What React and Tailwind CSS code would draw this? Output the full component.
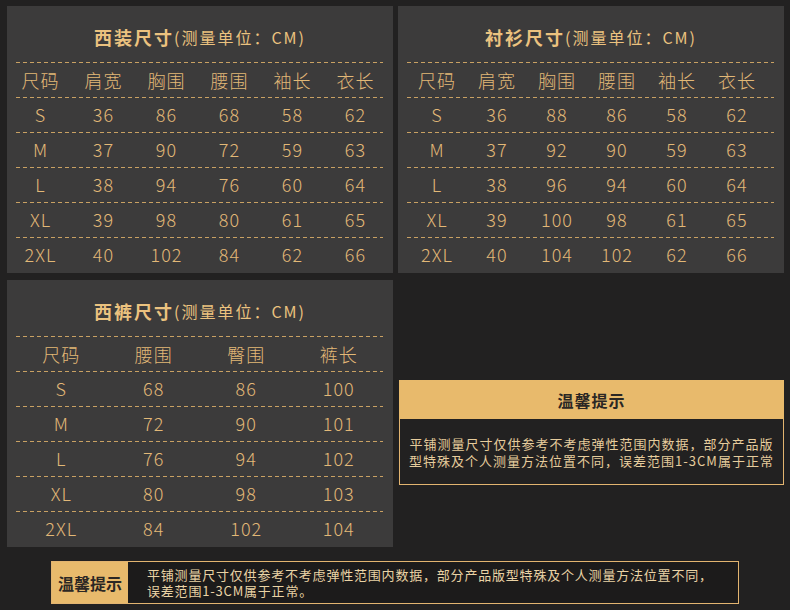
import React from 'react';

const suit = {
  title: '西装尺寸',
  head: ['尺码', '肩宽', '胸围', '腰围', '袖长', '衣长'],
  rows: [
    ['S', '36', '86', '68', '58', '62'],
    ['M', '37', '90', '72', '59', '63'],
    ['L', '38', '94', '76', '60', '64'],
    ['XL', '39', '98', '80', '61', '65'],
    ['2XL', '40', '102', '84', '62', '66'],
  ],
  grid: 'grid grid-cols-[repeat(6,63px)] pl-[2px]',
};

const shirt = {
  title: '衬衫尺寸',
  head: ['尺码', '肩宽', '胸围', '腰围', '袖长', '衣长'],
  rows: [
    ['S', '36', '88', '86', '58', '62'],
    ['M', '37', '92', '90', '59', '63'],
    ['L', '38', '96', '94', '60', '64'],
    ['XL', '39', '100', '98', '61', '65'],
    ['2XL', '40', '104', '102', '62', '66'],
  ],
  grid: 'grid grid-cols-[repeat(6,60px)] pl-[9px]',
};

const pants = {
  title: '西裤尺寸',
  head: ['尺码', '腰围', '臀围', '裤长'],
  rows: [
    ['S', '68', '86', '100'],
    ['M', '72', '90', '101'],
    ['L', '76', '94', '102'],
    ['XL', '80', '98', '103'],
    ['2XL', '84', '102', '104'],
  ],
  grid: 'grid grid-cols-[repeat(4,92.5px)] pl-[8px]',
};

const Dash = () => (
  <div className="ml-[9px] mr-[10px] h-px bg-[repeating-linear-gradient(90deg,#c9a163_0_4px,transparent_4px_7px)]" />
);

function Row({ cells, grid, head }) {
  return (
    <div className={`${grid} h-[34px] items-center ${head ? '' : 'pb-[3px]'}`}>
      {cells.map((c, i) => (
        <span key={i} className="text-center text-[18px] font-light leading-none tracking-[1px] text-[#e2b877]">
          {c}
        </span>
      ))}
    </div>
  );
}

function SizePanel({ data }) {
  return (
    <div className="h-[267px] bg-[#3c3b3b]">
      <div className="flex h-[56px] items-center justify-center pt-[6px] text-[#ebc27f]">
        <span className="text-[18px] font-bold tracking-[2px]">{data.title}</span>
        <span className="text-[16px] tracking-[2px]">(测量单位：CM)</span>
      </div>
      <Dash />
      <Row cells={data.head} grid={data.grid} head />
      {data.rows.map((r, i) => (
        <div key={i}>
          <Dash />
          <Row cells={r} grid={data.grid} />
        </div>
      ))}
    </div>
  );
}

export default function App() {
  return (
    <div className="h-[610px] w-[790px] overflow-hidden bg-[#222121] pl-[7px] pt-[6px] font-['Noto_Sans_CJK_SC',sans-serif]">
      <div className="grid grid-cols-[386px_386px] gap-x-[5px] gap-y-[7px]">
        <SizePanel data={suit} />
        <SizePanel data={shirt} />
        <SizePanel data={pants} />
        <div>
          <div className="ml-px mt-[100px] w-[385px]">
            <div className="flex h-[39px] items-center justify-center bg-[#e8ba6c] text-[16px] font-bold tracking-[1px] text-[#2b2724]">
              温馨提示
            </div>
            <div className="flex h-[66px] flex-col items-center justify-center border border-t-0 border-[#e2b470] text-[13px] leading-[17px] tracking-[1px] text-[#e6cc9c]">
              <span>平铺测量尺寸仅供参考不考虑弹性范围内数据，部分产品版</span>
              <span>型特殊及个人测量方法位置不同，误差范围1-3CM属于正常</span>
            </div>
          </div>
        </div>
      </div>
      <div className="ml-[44px] mt-[14px] flex h-[43px] w-[688px] border border-[#e2b470] bg-[#1c1b1b]">
        <div className="flex w-[76px] items-center justify-center bg-[#e8ba6c] text-[16px] font-bold text-[#2b2724]">
          温馨提示
        </div>
        <div className="flex flex-col justify-center pl-[19px] text-[13px] leading-[16px] tracking-[0.8px] text-[#ead3a5]">
          <span>平铺测量尺寸仅供参考不考虑弹性范围内数据，部分产品版型特殊及个人测量方法位置不同，</span>
          <span>误差范围1-3CM属于正常。</span>
        </div>
      </div>
    </div>
  );
}
